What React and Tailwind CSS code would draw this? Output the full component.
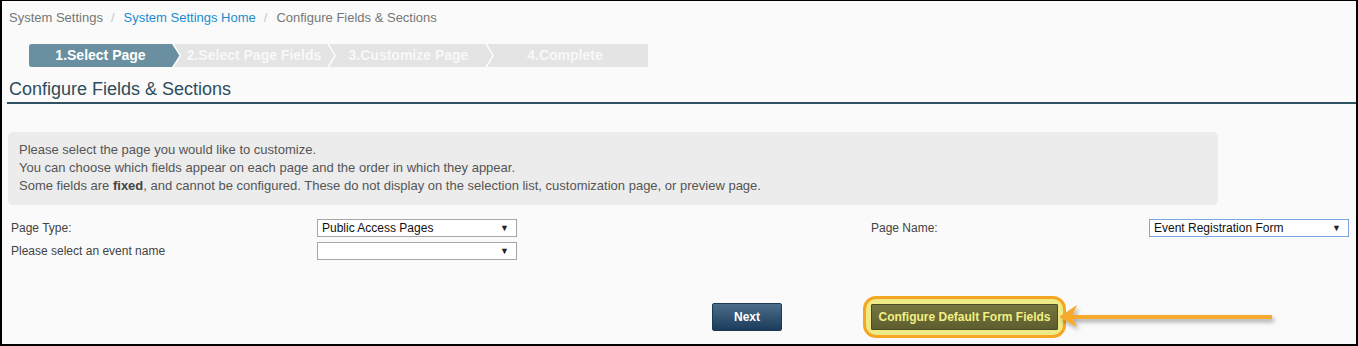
import React from 'react'

const font = { fontFamily: '"Liberation Sans", Arial, sans-serif' }

function Chevron({ fill }) {
  return (
    <svg width="9" height="23" viewBox="0 0 9 23" className="block shrink-0">
      {fill && <polygon points="0,0 8,11.5 0,23" fill={fill} />}
      <polyline points="0.5,-1 8.2,11.5 0.5,24" fill="none" stroke="#ffffff" strokeWidth="1.4" />
    </svg>
  )
}

function Stepper() {
  return (
    <div className="ml-[27px] flex h-[23px] w-[619px] bg-[#e4e4e4] text-[14px] font-bold leading-[23px] text-[#f8f8f8]">
      <div className="flex w-[143px] items-center justify-center rounded-l-[3px] bg-[#6a8fa0] text-white">1.Select Page</div>
      <Chevron fill="#6a8fa0" />
      <div className="w-[146px] text-center">2.Select Page Fields</div>
      <Chevron />
      <div className="w-[149px] pr-[4px] text-center">3.Customize Page</div>
      <Chevron />
      <div className="flex-1 pr-[12px] text-center">4.Complete</div>
    </div>
  )
}

function FakeSelect({ value, focused }) {
  return (
    <div
      className={`flex h-[18px] w-[200px] items-center justify-between border bg-white pl-[4px] pr-[7px] text-[12px] text-[#111] ${
        focused ? 'border-[#7ea6dc]' : 'border-[#a6a6a6]'
      }`}
    >
      <span>{value}</span>
      <span className="text-[9px] leading-none text-[#222]">▼</span>
    </div>
  )
}

export default function App() {
  return (
    <div
      style={font}
      className="relative h-[346px] w-[1358px] overflow-hidden border-t border-r-2 border-b-2 border-l-2 border-black bg-[#fafafa]"
    >
      {/* breadcrumb */}
      <div className="pl-[7px] pt-[8px] text-[13px] leading-[18px] text-[#777]">
        <span>System Settings</span>
        <span className="pl-[8px] pr-[9px] text-[#c4c4c4]">/</span>
        <span className="text-[#1a8dd0]">System Settings Home</span>
        <span className="pl-[8px] pr-[9px] text-[#c4c4c4]">/</span>
        <span>Configure Fields &amp; Sections</span>
      </div>

      <div className="mt-[17px]">
        <Stepper />
      </div>

      {/* title */}
      <div className="ml-[5px] mt-[11px] border-b-[2px] border-[#2f5262] pb-[2px] pl-[2px]">
        <h1 className="text-[18px] font-normal leading-[22px] text-[#2e4c5c]">Configure Fields &amp; Sections</h1>
      </div>

      {/* info */}
      <div className="ml-[6px] mt-[28px] w-[1210px] rounded-[5px] bg-[#ececec] pb-[10px] pl-[11px] pt-[9px] text-[13px] leading-[18px] text-[#555]">
        <p>Please select the page you would like to customize.</p>
        <p>You can choose which fields appear on each page and the order in which they appear.</p>
        <p>
          Some fields are <b className="text-[#444]">fixed</b>, and cannot be configured. These do not display on the selection list, customization page, or preview page.
        </p>
      </div>

      {/* form */}
      <div className="ml-[9px] mt-[14px] grid grid-cols-[306px_554px_278px_200px] gap-y-[5px] text-[12px] text-[#444]">
        <div className="flex items-center">Page Type:</div>
        <FakeSelect value="Public Access Pages" />
        <div className="flex items-center">Page Name:</div>
        <FakeSelect value="Event Registration Form" focused />
        <div className="flex items-center">Please select an event name</div>
        <FakeSelect value="" />
      </div>

      {/* buttons */}
      <div className="ml-[710px] mt-[36px] flex h-[42px] items-center text-[12px] font-bold">
        <button className="h-[28px] w-[70px] rounded-[2px] border border-[#1d3954] bg-gradient-to-b from-[#4d6d8c] to-[#1c3c5c] text-white">
          Next
        </button>
        <div className="ml-[81px] rounded-[13px] border-[3px] border-[#f5a623] bg-[#eeea86] px-[5px] py-[5px]">
          <button className="h-[26px] w-[187px] rounded-[1px] border border-[#4a4a22] bg-gradient-to-b from-[#767540] to-[#5e5d2e] text-[#f2ef85]">
            Configure Default Form Fields
          </button>
        </div>
      </div>

      {/* callout arrow */}
      <svg className="absolute left-[1050px] top-[300px]" width="230" height="34" viewBox="0 0 230 34">
        <defs>
          <filter id="sh" x="-10%" y="-50%" width="120%" height="200%">
            <feDropShadow dx="2" dy="3" stdDeviation="2" floodColor="#000" floodOpacity="0.35" />
          </filter>
        </defs>
        <g filter="url(#sh)">
          <line x1="20" y1="16" x2="220" y2="16" stroke="#f6a92a" strokeWidth="4" />
          <polygon points="7,16 25,4 20,16 25,26" fill="#f6a92a" />
        </g>
      </svg>
    </div>
  )
}
